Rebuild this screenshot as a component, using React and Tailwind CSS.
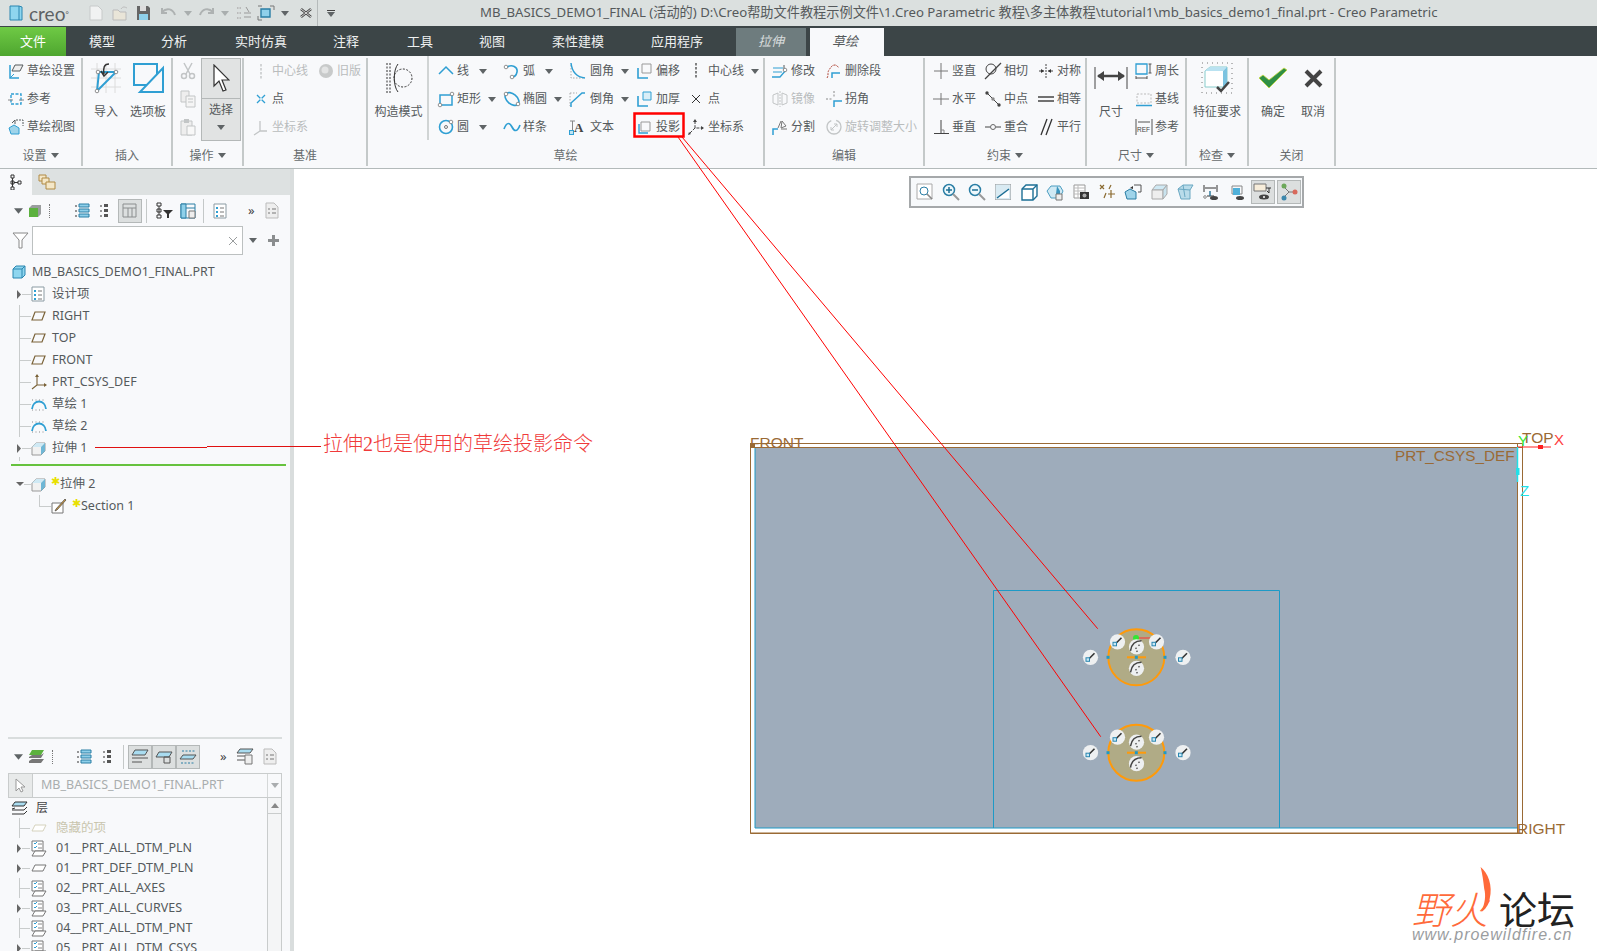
import React from "react";

const B = "#2f9fd3";
const D = "#555a5c";
const G = "#c2c5c6";
const T = "#7a6238";

const Svg = ({ w = 18, h = 18, vb, children }) => (
  <svg width={w} height={h} viewBox={vb || `0 0 ${w} ${h}`} fill="none" className="shrink-0">
    {children}
  </svg>
);

const Arrow = ({ className = "" }) => (
  <svg width="8" height="5" viewBox="0 0 8 5" className={`shrink-0 ${className}`}>
    <path d="M0 0h8L4 5z" fill="#5f6466" />
  </svg>
);

const Node = ({ x, y }) => <circle cx={x} cy={y} r="1.8" fill="#fff" stroke="#777" strokeWidth="0.8" />;

// ribbon icons
const icons = {
  setup: <Svg><path d="M5 9l3-6h8l-3 6z" fill="#eee" stroke={D} /><path d="M3 3v13h9" stroke={B} strokeWidth="1.5" /><path d="M3 16l4-4" stroke={B} /></Svg>,
  refs: <Svg><path d="M4 4h10v10H4z" stroke={B} strokeWidth="1.4" strokeDasharray="3 1.5" /><path d="M1 10h5M12 10h5" stroke="#888" /></Svg>,
  sview: <Svg><path d="M9 2h7v6" stroke={D} strokeDasharray="2 1" /><path d="M2 10l5-3 5 3v6H4z" fill="#9fd4ea" stroke={B} /><path d="M5 5l3-3v4" stroke={D} /></Svg>,
  cline: <Svg><path d="M9 2v15" stroke={G} strokeDasharray="2.5 1.5" strokeWidth="1.4" /></Svg>,
  oldv: <Svg><circle cx="9" cy="9" r="7" fill="#c8caca" /><circle cx="8" cy="8" r="3.5" fill="#e3e4e4" /></Svg>,
  pt: <Svg><path d="M5 5l8 8M13 5l-8 8" stroke={B} strokeWidth="1.3" /><circle cx="9" cy="9" r="1" fill="#fff" /></Svg>,
  csysg: <Svg><path d="M8 3v10l7 0M8 13l-6 4" stroke={G} strokeWidth="1.3" /></Svg>,
  line: <Svg><path d="M2 12l7-7 7 7" stroke={B} strokeWidth="1.5" /></Svg>,
  arc: <Svg><path d="M4 5c5-3 11 0 10 5s-4 5-5 5" stroke={B} strokeWidth="1.6" /><Node x={3} y={5} /><Node x={9} y={15} /></Svg>,
  rect: <Svg><path d="M3 5h12v10H3z" stroke={B} strokeWidth="1.5" /><Node x={15} y={4} /><Node x={3} y={15} /></Svg>,
  ell: <Svg><ellipse cx="9" cy="9" rx="8" ry="5" transform="rotate(40 9 9)" stroke={B} strokeWidth="1.6" /><Node x={3} y={4} /><Node x={15} y={14} /></Svg>,
  circ: <Svg><circle cx="9" cy="9" r="6.5" stroke={B} strokeWidth="1.6" /><circle cx="9" cy="9" r="1.5" stroke="#777" /><Node x={14} y={4} /></Svg>,
  spline: <Svg><path d="M1 11c3-8 6-6 8-2s5 6 8-2" stroke={B} strokeWidth="1.7" /></Svg>,
  fillet: <Svg><path d="M3 3v13h13" stroke="#aaa" strokeDasharray="1.5 1.5" /><path d="M3 1c1 9 5 14 14 15" stroke={B} strokeWidth="1.5" /></Svg>,
  chamfer: <Svg><path d="M2 3h7M2 3v13" stroke="#aaa" strokeDasharray="1.5 1.5" /><path d="M3 17v-4L14 3h3" stroke={B} strokeWidth="1.5" /></Svg>,
  text: <Svg><path d="M2 3h5M4.5 3v10" stroke="#888" /><rect x="1.5" y="12.5" width="4" height="4" stroke={B} fill="#bfe3f2" /><text x="6" y="14" fontSize="13" fontWeight="700" fill="#444" fontFamily="Liberation Serif">A</text></Svg>,
  offset: <Svg><path d="M7 2h9v9H7z" stroke="#999" /><path d="M3 6v10h10" stroke={B} strokeWidth="1.6" /></Svg>,
  thick: <Svg><path d="M8 2h8v8H8z" stroke={B} fill="#d9eef7" /><path d="M3 6v10h10" stroke={B} strokeWidth="1.6" /></Svg>,
  proj: <Svg><path d="M6 4h9v9H6z" stroke="#999" /><path d="M4 6v9h9" stroke={B} strokeWidth="1.4" /></Svg>,
  cl: <Svg><path d="M9 1v16" stroke="#333" strokeDasharray="2.5 1.5" strokeWidth="1.2" /></Svg>,
  ptd: <Svg><path d="M5 5l8 8M13 5l-8 8" stroke="#333" /></Svg>,
  csysd: <Svg><path d="M8 3v7h8M8 10l-6 6" stroke="#444" strokeDasharray="3 1.2" /><path d="M8 1l-2 3h4zM17 10l-3-2v4zM1 17l1-3 2 2z" fill="#444" /></Svg>,
  modify: <Svg><path d="M2 6h10M2 10h9" stroke={B} /><path d="M1 15h8l6-7" stroke={B} strokeWidth="1.3" /><path d="M13 3v5" stroke={D} /><Node x={14} y={8} /></Svg>,
  delseg: <Svg><path d="M2 16c2-3 0-5 2-8s3-5 6-5c3 0 2 3 4 2" stroke="#b34a3b" strokeDasharray="2 1" /><path d="M7 16v-5h8" stroke={B} strokeWidth="1.5" /></Svg>,
  mirror: <Svg><path d="M9 1v16" stroke={G} strokeDasharray="2 1" /><path d="M2 5l5-2v12l-5-2zM16 5l-5-2v12l5-2z" stroke={G} /></Svg>,
  corner: <Svg><path d="M1 9h7M9 1v7" stroke="#888" strokeDasharray="2 1.5" /><path d="M9 17v-6h8" stroke={B} strokeWidth="1.5" /></Svg>,
  divide: <Svg><path d="M2 17v-6h5" stroke={B} strokeWidth="1.5" /><path d="M10 11h6M10 3l-3 7M11 3l4 5-5 2z" stroke="#777" /></Svg>,
  rotres: <Svg><circle cx="9" cy="9" r="7" stroke={G} strokeWidth="1.3" strokeDasharray="30 5" /><path d="M6 12l6-6M6 12h3M6 12V9M12 6H9M12 6v3" stroke={G} /></Svg>,
  vert: <Svg><path d="M9 1v16M2 9h14" stroke="#777" /></Svg>,
  tang: <Svg><circle cx="7" cy="7" r="5" stroke="#444" /><path d="M1 17L17 1" stroke="#444" strokeWidth="1.2" /></Svg>,
  sym: <Svg><path d="M9 2v14" stroke="#444" strokeDasharray="2 1" /><path d="M2 9h5M11 9h5" stroke="#444" /><path d="M7 9L4 7v4zM11 9l3-2v4z" fill="#333" /></Svg>,
  horiz: <Svg><path d="M1 9h16M9 3v12" stroke="#777" /></Svg>,
  mid: <Svg><path d="M2 2l14 14" stroke="#444" /><circle cx="3" cy="3" r="1.7" fill="#444" /><circle cx="9" cy="9" r="1.7" fill="#888" /><circle cx="15" cy="15" r="1.7" fill="#444" /></Svg>,
  eq: <Svg><path d="M1 7h16M1 11h16" stroke="#444" strokeWidth="1.3" /></Svg>,
  perp: <Svg><path d="M9 2v13M2 15.5h15" stroke="#444" /><path d="M9 12h3v3" stroke="#888" /></Svg>,
  coin: <Svg><path d="M1 9h5M12 9h5" stroke="#444" /><circle cx="9" cy="9" r="2.5" stroke="#666" /></Svg>,
  par: <Svg><path d="M4 17L10 1M9 17l6-16" stroke="#333" strokeWidth="1.3" /></Svg>,
  perim: <Svg><path d="M1 2h11v10H1z" stroke={B} strokeWidth="1.3" /><path d="M15 2v9M13.5 2h3M13.5 11h3M1 16h11M1 14v3M12 14v3" stroke="#555" /></Svg>,
  base: <Svg><path d="M2 4h14v9H2z" stroke="#bbb" strokeDasharray="2 1.5" /><path d="M1 15.5h16" stroke={B} strokeWidth="1.5" /></Svg>,
  ref: <Svg><path d="M1 1v16M17 1v16M3 4h12" stroke="#555" /><text x="2" y="14" fontSize="6.5" fill="#444" fontFamily="Liberation Sans">REF</text></Svg>,
  cut: <Svg><path d="M5 1l6 11M13 1L7 12" stroke={G} strokeWidth="1.5" /><circle cx="5" cy="14" r="2.5" stroke={G} strokeWidth="1.5" /><circle cx="13" cy="14" r="2.5" stroke={G} strokeWidth="1.5" /></Svg>,
  copy: <Svg><path d="M2 1h8v11H2z" stroke={G} fill="#eee" /><path d="M7 6h9v11H7z" stroke={G} fill="#f5f5f5" /><path d="M9 9h5M9 12h5" stroke={G} /></Svg>,
  paste: <Svg><path d="M2 3h11v14H2z" stroke={G} fill="#eee" /><path d="M5 1h5v4H5z" fill={G} /><path d="M8 8h8v9H8z" stroke={G} fill="#f8f8f8" /></Svg>,
};

const Item = ({ icon, label, dim, arrow, width = "w-[20px]" }) => (
  <div className="flex items-center h-[28px] whitespace-nowrap">
    <span className={`${width} flex items-center shrink-0`}>{icons[icon]}</span>
    <span className={dim ? "text-[#b9bcbd]" : "text-[#555a5c]"}>{label}</span>
    {arrow && <Arrow className={label.length === 1 ? "ml-[10px]" : "ml-[7px]"} />}
  </div>
);

const Col = ({ className = "", children }) => <div className={`flex flex-col shrink-0 pt-[1px] ${className}`}>{children}</div>;

const Large = ({ width, label, children }) => (
  <div className={`flex flex-col items-center shrink-0 ${width}`}>
    <div className="h-[44px] flex items-center justify-center">{children}</div>
    <div className="h-[24px] flex items-center text-[#555a5c] whitespace-nowrap">{label}</div>
  </div>
);

const Group = ({ width, label, arrow, children }) => (
  <>
    <div className={`flex flex-col shrink-0 ${width}`}>
      <div className="h-[87px] flex">{children}</div>
      <div className="h-[25px] flex items-center justify-center gap-[4px] text-[#666b6d]">
        {label}
        {arrow && <Arrow />}
      </div>
    </div>
    <div className="w-[2px] shrink-0 my-[2px] bg-[#c4c9c9]" />
  </>
);

const TitleBar = () => (
  <div className="h-[26px] bg-[#dbe0df] flex items-center">
    <div className="w-[480px] shrink-0 flex items-center">
      <svg width="14" height="16" viewBox="0 0 14 16" className="ml-[9px] shrink-0">
        <path d="M1 1h9l3 1v13l-3 0H1z" fill="#8fd6ef" stroke="#2a86b0" />
        <path d="M10 1v14" stroke="#2a86b0" />
      </svg>
      <span className="ml-[6px] w-[46px] text-[19px] leading-none text-[#5d6264] font-['Lato',sans-serif]">creo<sup className="text-[8px]">°</sup></span>
      <span className="ml-[14px]"><Svg w={14} h={16}><path d="M1 1h8l4 4v10H1z" fill="#f1f2f2" stroke="#c7caca" /></Svg></span>
      <span className="ml-[9px]"><Svg w={17} h={16}><path d="M1 5h5l2 2h6v8H1z" fill="#e9e5d8" stroke="#bbb" /><path d="M9 4c2-3 4-2 6-1" stroke="#bbb" /></Svg></span>
      <span className="ml-[7px]"><Svg w={15} h={16}><path d="M1 1h11l2 2v12H1z" fill="#666" /><path d="M4 1h6v5H4z" fill="#ddd" /><path d="M3 9h9v6H3z" fill="#8fd0ea" /></Svg></span>
      <span className="ml-[10px]"><Svg w={15} h={12}><path d="M1 5c5-5 11-3 13 3M1 1v5h5" stroke="#aeb2b2" strokeWidth="2" /></Svg></span>
      <Arrow className="ml-[8px] opacity-40" />
      <span className="ml-[7px]"><Svg w={15} h={12}><path d="M14 5C9 0 3 2 1 8M14 1v5H9" stroke="#aeb2b2" strokeWidth="2" /></Svg></span>
      <Arrow className="ml-[7px] opacity-40" />
      <span className="ml-[7px]"><Svg w={15} h={16}><path d="M1 3h5M1 8h5M1 13h5" stroke="#bbb" strokeDasharray="1.5 1" strokeWidth="2" /><path d="M8 12h7M8 8h7M10 2l3 5" stroke="#999" /></Svg></span>
      <span className="ml-[6px]"><Svg w={18} h={16}><path d="M1 1h4M13 1h4v4M1 11v4h4" stroke="#777" /><path d="M4 4h9v8H4z" fill="#8fd0ea" stroke="#2a7ea5" strokeWidth="1.4" /></Svg></span>
      <Arrow className="ml-[6px]" />
      <span className="ml-[11px]"><Svg w={12} h={12}><path d="M1 2l10 8M11 2L1 10" stroke="#444" strokeWidth="2.5" /><path d="M1 2l10 8M11 2L1 10" stroke="#fff" strokeWidth="0.8" /></Svg></span>
      <span className="ml-[5px] w-[1px] h-[26px] bg-[#b5baba]" />
      <span className="ml-[9px] flex flex-col gap-[1px]"><span className="w-[8px] h-[1px] bg-[#444]" /><Arrow /></span>
    </div>
    <span className="text-[13.2px] text-[#55595b] whitespace-nowrap">MB_BASICS_DEMO1_FINAL (活动的) D:\Creo帮助文件教程示例文件\1.Creo Parametric 教程\多主体教程\tutorial1\mb_basics_demo1_final.prt - Creo Parametric</span>
  </div>
);

const tabs = [
  ["模型", "w-[72px]"],
  ["分析", "w-[72px]"],
  ["实时仿真", "w-[102px]"],
  ["注释", "w-[68px]"],
  ["工具", "w-[80px]"],
  ["视图", "w-[64px]"],
  ["柔性建模", "w-[108px]"],
  ["应用程序", "w-[90px]"],
];

const TabBar = () => (
  <div className="h-[30px] bg-[#3c4547] flex text-[13px]">
    <div className="w-[66px] mt-[1px] pt-[1px] flex items-center justify-center text-white bg-gradient-to-b from-[#6fca45] to-[#4ea62f]">文件</div>
    {tabs.map(([t, w]) => (
      <div key={t} className={`${w} pt-[2px] flex items-center justify-center text-[#eef0f0]`}>{t}</div>
    ))}
    <div className="w-[70px] ml-[14px] mt-[2px] mr-[2px] flex items-center justify-center italic text-[#d9dddd] bg-[#6e7c7e]">拉伸</div>
    <div className="w-[74px] ml-[2px] mt-[2px] pr-[4px] flex items-center justify-center italic text-[#555a5c] bg-[#f8f9fb]">草绘</div>
  </div>
);

const Ribbon = () => (
  <div className="h-[113px] bg-[#f8f9fb] border-b border-[#b3baba] flex text-[12px]">
    <Group width="w-[81px]" label="设置" arrow>
      <Col className="pl-[7px]">
        <Item icon="setup" label="草绘设置" />
        <Item icon="refs" label="参考" />
        <Item icon="sview" label="草绘视图" />
      </Col>
    </Group>
    <Group width="w-[88px]" label="插入">
      <Large width="w-[42px] ml-[2px]" label="导入">
        <Svg w={34} h={34}>
          <path d="M2 8h30M2 17h30M2 26h30M8 2v30M17 2v30M26 2v30" stroke="#dcdcdc" />
          <path d="M8 30L10 11h17L8 30" stroke={B} strokeWidth="2" />
          <path d="M20 3c-5 0-6 4-5 10M12 10l3 5 4-4" stroke="#333" strokeWidth="1.5" />
          <Node x={8} y={30} /><Node x={9} y={11} /><Node x={27} y={11} />
        </Svg>
      </Large>
      <Large width="w-[42px]" label="选项板">
        <Svg w={34} h={34}>
          <path d="M3 3h23v21H3z" stroke={B} strokeWidth="2" />
          <path d="M32 7v24H9z" stroke={B} strokeWidth="2" fill="#f8f9fb" />
        </Svg>
      </Large>
    </Group>
    <Group width="w-[69px]" label="操作" arrow>
      <Col className="pl-[6px] w-[28px]">
        <div className="h-[28px] flex items-center">{icons.cut}</div>
        <div className="h-[28px] flex items-center">{icons.copy}</div>
        <div className="h-[28px] flex items-center">{icons.paste}</div>
      </Col>
      <div className="w-[40px] mt-[2px] h-[83px] flex flex-col border border-[#b4b8b8] bg-[#e1e3e3]">
        <div className="h-[40px] flex items-center justify-center border-b border-[#b4b8b8]">
          <svg width="18" height="30" viewBox="0 0 18 30"><path d="M2 1v21l5-5 4 10 3-1-4-10h7z" fill="#fff" stroke="#333" strokeWidth="1.2" /></svg>
        </div>
        <div className="flex-1 flex flex-col items-center pt-[2px] gap-[6px] text-[#555a5c]">选择<Arrow /></div>
      </div>
    </Group>
    <Group width="w-[122px]" label="基准">
      <Col className="pl-[8px]">
        <div className="flex">
          <Item icon="cline" label="中心线" dim />
          <div className="ml-[9px]"><Item icon="oldv" label="旧版" dim /></div>
        </div>
        <Item icon="pt" label="点" />
        <Item icon="csysg" label="坐标系" dim />
      </Col>
    </Group>
    <Group width="w-[395px]" label="草绘">
      <div className="w-[61px] h-[84px] shrink-0 border-r-2 border-[#d0d4d4] flex flex-col items-center pl-[2px]">
        <div className="h-[44px] flex items-center justify-center">
          <Svg w={28} h={32}>
            <path d="M2 1v30M5 1v30" stroke="#333" strokeDasharray="2 1.5" />
            <path d="M13 2C8 8 8 24 13 30" stroke="#333" />
            <circle cx="18" cy="16" r="9" stroke="#333" strokeDasharray="2 1.5" />
          </Svg>
        </div>
        <div className="h-[24px] flex items-center text-[#555a5c] whitespace-nowrap">构造模式</div>
      </div>
      <Col className="w-[66px] ml-[8px]">
        <Item icon="line" label="线" arrow />
        <Item icon="rect" label="矩形" arrow />
        <Item icon="circ" label="圆" arrow />
      </Col>
      <Col className="w-[65px]">
        <Item icon="arc" label="弧" arrow />
        <Item icon="ell" label="椭圆" arrow />
        <Item icon="spline" label="样条" />
      </Col>
      <Col className="w-[67px]">
        <Item icon="fillet" label="圆角" arrow width="w-[22px]" />
        <Item icon="chamfer" label="倒角" arrow width="w-[22px]" />
        <Item icon="text" label="文本" width="w-[22px]" />
      </Col>
      <Col className="w-[52px]">
        <Item icon="offset" label="偏移" width="w-[21px]" />
        <Item icon="thick" label="加厚" width="w-[21px]" />
        <Item icon="proj" label="投影" width="w-[21px]" />
      </Col>
      <Col>
        <Item icon="cl" label="中心线" arrow width="w-[21px]" />
        <Item icon="ptd" label="点" width="w-[21px]" />
        <Item icon="csysd" label="坐标系" width="w-[21px]" />
      </Col>
    </Group>
    <Group width="w-[158px]" label="编辑">
      <Col className="w-[54px] ml-[6px]">
        <Item icon="modify" label="修改" />
        <Item icon="mirror" label="镜像" dim />
        <Item icon="divide" label="分割" />
      </Col>
      <Col>
        <Item icon="delseg" label="删除段" />
        <Item icon="corner" label="拐角" />
        <Item icon="rotres" label="旋转调整大小" dim />
      </Col>
    </Group>
    <Group width="w-[160px]" label="约束" arrow>
      <Col className="w-[52px] ml-[7px]">
        <Item icon="vert" label="竖直" />
        <Item icon="horiz" label="水平" />
        <Item icon="perp" label="垂直" />
      </Col>
      <Col className="w-[53px]">
        <Item icon="tang" label="相切" />
        <Item icon="mid" label="中点" />
        <Item icon="coin" label="重合" />
      </Col>
      <Col>
        <Item icon="sym" label="对称" />
        <Item icon="eq" label="相等" />
        <Item icon="par" label="平行" />
      </Col>
    </Group>
    <Group width="w-[98px]" label="尺寸" arrow>
      <Large width="w-[48px]" label="尺寸">
        <Svg w={34} h={24}>
          <path d="M1 1v22M33 1v22" stroke="#444" />
          <path d="M4 10h26" stroke="#444" strokeWidth="2.5" />
          <path d="M3 10l7-5v10zM31 10l-7-5v10z" fill="#444" />
        </Svg>
      </Large>
      <Col>
        <Item icon="perim" label="周长" />
        <Item icon="base" label="基线" />
        <Item icon="ref" label="参考" />
      </Col>
    </Group>
    <Group width="w-[60px]" label="检查" arrow>
      <Large width="w-[60px]" label="特征要求">
        <Svg w={32} h={32}>
          <path d="M1 1h30v30H1z" stroke="#777" strokeDasharray="1 4" />
          <path d="M4 9l5-4h17v16l-4 4H4z" fill="#fff" stroke="#8cc" />
          <path d="M4 9l5-4h17l-4 4z" fill="#b9e2f1" />
          <path d="M22 9l4-4v16l-4 4z" fill="#7cc3e0" />
          <path d="M16 25l4 4 8-9" stroke="#444" strokeWidth="2.5" />
        </Svg>
      </Large>
    </Group>
    <Group width="w-[85px]" label="关闭">
      <Large width="w-[40px] ml-[4px]" label="确定">
        <Svg w={30} h={22}><path d="M1 11l4-3 6 5L26 1l3 2-18 18z" fill="#2f8f45" stroke="#c4d83a" strokeWidth="0.8" /></Svg>
      </Large>
      <Large width="w-[40px]" label="取消">
        <Svg w={19} h={19}><path d="M2 2l15 15M17 2L2 17" stroke="#444" strokeWidth="4" /></Svg>
      </Large>
    </Group>
  </div>
);

const TreeCube = ({ size = 15 }) => (
  <Svg w={size} h={size} vb="0 0 15 15">
    <path d="M1 6l4-4h9v8l-4 4H1z" fill="#f1f1f1" stroke="#999" />
    <path d="M5 2h9l-4 4H1z" fill="#cfe9f4" />
    <path d="M10 6l4-4v8l-4 4z" fill="#6fb7d6" />
  </Svg>
);
const Plane = () => <Svg w={15} h={12}><path d="M4 2h10l-3 8H1z" stroke={T} strokeWidth="1.2" /></Svg>;
const Csys = () => <Svg w={16} h={16}><path d="M6 1v10h9M6 11l-5 4" stroke={T} strokeWidth="1.1" /><path d="M6 0l-2 3h4zM16 11l-3-2v4z" fill={T} /></Svg>;
const Sk = () => <Svg w={16} h={14}><path d="M1 12c1-10 13-10 14 0" stroke={B} strokeWidth="1.8" /><path d="M1 3h14M1 13h14" stroke="#888" strokeDasharray="1 2.5" /></Svg>;
const Items = () => <Svg w={14} h={16}><path d="M1 1h12v14H1z" stroke="#8b9ba3" fill="#fff" /><path d="M3 4h2v2H3zM3 8h2v2H3zM3 12h2v2H3z" fill={B} /><path d="M7 5h4M7 9h4M7 13h4" stroke="#777" /></Svg>;

const Expand = ({ open }) =>
  open ? (
    <svg width="8" height="6" viewBox="0 0 8 6"><path d="M0 1h8L4 5z" fill="#666" /></svg>
  ) : (
    <svg width="6" height="9" viewBox="0 0 6 9"><path d="M1 0l4 4.5L1 9z" fill="#666" /></svg>
  );

const Row = ({ icon, label, expand, open, line = true, star }) => (
  <div className="relative h-[22px] flex items-center whitespace-nowrap">
    {line && <span className="absolute left-[19px] top-0 w-[1px] bg-[#c9cccc] h-full" />}
    {line && <span className="absolute left-[19px] top-[11px] w-[12px] h-[1px] bg-[#c9cccc]" />}
    {expand && <span className="absolute left-[16px] top-0 h-full flex items-center bg-[#f8f9fb]"><Expand open={open} /></span>}
    <span className="ml-[31px] w-[21px] flex items-center shrink-0 relative">{icon}</span>
    {star && <span className="text-[#e8e000] text-[11px] leading-none -ml-[1px] self-start mt-[2px]">✱</span>}
    <span>{label}</span>
  </div>
);

const LayerIcon = () => (
  <Svg w={16} h={17}>
    <path d="M1 1h11v10H1z" fill="#fff" stroke="#777" />
    <path d="M3 3l1 1 2-2M3 7l1 1 2-2" stroke={B} />
    <path d="M7 4h4M7 8h4" stroke="#888" />
    <path d="M4 11h11l-3 5H1z" fill="#fff" stroke="#777" />
  </Svg>
);

const Pressed = ({ children, className = "" }) => (
  <span className={`flex items-center justify-center bg-[#dcdfdf] border border-[#b4b8b8] ${className}`}>{children}</span>
);

const TreeListIcon = () => (
  <Svg w={16} h={16}><path d="M1 3h2M1 8h2M1 13h2" stroke="#333" /><path d="M5 1h10v3H5zM5 6h10v3H5zM5 11h10v3H5z" fill="#8fd0ea" stroke="#2a7ea5" /></Svg>
);
const TreeColIcon = () => (
  <Svg w={11} h={16}><path d="M1 3l2 0M1 8h2M1 13h2" stroke="#333" /><path d="M5 1h4v3H5zM5 6h4v3H5zM5 11h4v3H5z" fill="#555" /></Svg>
);
const DocIcon = () => (
  <Svg w={14} h={17}><path d="M1 1h8l4 4v11H1z" fill="#eee" stroke="#bbb" /><path d="M3 7h2M7 7h4M3 11h2M7 11h4" stroke="#777" /></Svg>
);

const ModelTree = () => (
  <div className="h-[568px] shrink-0 flex flex-col">
    <div className="h-[26px] flex bg-[#dde1e1]">
      <div className="w-[32px] bg-[#f8f9fb] flex items-center justify-center">
        <Svg w={12} h={16}><path d="M1 1h3v3H1zM1 7h3v3H1zM1 13h3v3H1zM8 7h3v3H8z" stroke="#333" /><path d="M2.5 4v9M4 8.5h4" stroke="#333" /></Svg>
      </div>
      <div className="ml-[6px] flex items-center">
        <Svg w={18} h={18}><path d="M1 2h7v6H1z" fill="#f4e7c8" stroke="#b08a44" /><path d="M4 5h7v6H4z" fill="#f4e7c8" stroke="#b08a44" /><path d="M8 9h9v7H8z" fill="#f4e7c8" stroke="#b08a44" /></Svg>
      </div>
    </div>
    <div className="h-[31px] flex items-center">
      <Arrow className="ml-[14px] w-[9px] h-[6px]" />
      <span className="ml-[5px]"><Svg w={14} h={14}><path d="M1 4h9v9H1z" fill="#5cb13e" /><path d="M1 4l3-3h9l-3 3zM10 4l3-3v9l-3 3z" fill="#9a9d9e" /></Svg></span>
      <span className="ml-[7px] h-[14px] w-[1px] border-l border-dotted border-[#777]" />
      <span className="ml-[24px]"><TreeListIcon /></span>
      <span className="ml-[9px]"><TreeColIcon /></span>
      <Pressed className="ml-[8px] w-[24px] h-[24px]">
        <Svg w={16} h={16}><path d="M1 1h13v13H1zM1 5h13M6 5v9M10 5v9" stroke="#8b8e8f" /></Svg>
      </Pressed>
      <span className="ml-[4px] w-[1px] h-[24px] bg-[#c4c8c8]" />
      <span className="ml-[9px]"><Svg w={17} h={17}><path d="M1 1h4v3H1zM1 7h4v3H1zM1 13h4v3H1zM3 4v9" stroke="#333" /><path d="M7 8h10l-4 4v4h-2v-4z" fill="#333" /></Svg></span>
      <span className="ml-[7px]"><Svg w={16} h={16}><path d="M1 1h14v14H1z" stroke="#2a7ea5" /><path d="M1 1h5v14H1z" fill="#8fd0ea" stroke="#2a7ea5" /><path d="M6 5h9" stroke="#2a7ea5" /><path d="M9 8h6v7H9z" fill="#eee" stroke="#777" /></Svg></span>
      <span className="ml-[7px] w-[1px] h-[24px] bg-[#c4c8c8]" />
      <span className="ml-[9px]"><Items /></span>
      <span className="ml-[21px] text-[#444] text-[13px] leading-none w-[14px]">»</span>
      <span className="ml-[3px]"><DocIcon /></span>
    </div>
    <div className="h-[29px] flex items-center">
      <span className="ml-[12px] w-[20px]"><Svg w={17} h={17}><path d="M1 1h15l-6 7v8H7V8z" fill="#fff" stroke="#888" /></Svg></span>
      <div className="w-[211px] h-[29px] border border-[#bcc0c0] bg-white flex items-center justify-end pr-[4px]">
        <Svg w={10} h={10}><path d="M1 1l8 8M9 1L1 9" stroke="#9a9d9e" /></Svg>
      </div>
      <Arrow className="ml-[6px]" />
      <span className="ml-[11px] relative w-[11px] h-[11px]">
        <span className="absolute left-0 top-[4px] w-[11px] h-[3px] bg-[#8b8e8f]" />
        <span className="absolute left-[4px] top-0 w-[3px] h-[11px] bg-[#8b8e8f]" />
      </span>
    </div>
    <div className="h-[22px] mt-[6px] flex items-center">
      <span className="ml-[12px] w-[20px]"><Svg w={14} h={14}><path d="M1 4l3-3h9v9l-3 3H1z" fill="#8fd6ef" stroke="#2a86b0" /><path d="M1 4h9v9M10 4l3-3" stroke="#2a86b0" /></Svg></span>
      MB_BASICS_DEMO1_FINAL.PRT
    </div>
    <Row icon={<Items />} label="设计项" expand />
    <Row icon={<Plane />} label="RIGHT" />
    <Row icon={<Plane />} label="TOP" />
    <Row icon={<Plane />} label="FRONT" />
    <Row icon={<Csys />} label="PRT_CSYS_DEF" />
    <Row icon={<Sk />} label="草绘 1" />
    <Row icon={<Sk />} label="草绘 2" />
    <Row icon={<TreeCube />} label="拉伸 1" expand />
    <div className="relative h-[16px] mt-[-2px] flex items-center">
      <span className="absolute left-[19px] top-0 h-[4px] w-[1px] bg-[#c9cccc]" />
      <div className="ml-[11px] w-[275px] h-[2px] bg-[#66c23e]" />
    </div>
    <Row icon={<TreeCube />} label="拉伸 2" expand open star />
    <div className="relative h-[22px] flex items-center whitespace-nowrap">
      <span className="absolute left-[39px] top-0 w-[1px] h-[11px] bg-[#c9cccc]" />
      <span className="absolute left-[39px] top-[11px] w-[12px] h-[1px] bg-[#c9cccc]" />
      <span className="ml-[51px] w-[21px]"><Svg w={16} h={16}><path d="M1 5h11v10H1z" fill="#fff" stroke="#777" /><path d="M5 11l9-10 1 1-9 10-2 1z" fill="#c94" stroke="#444" strokeWidth="0.7" /></Svg></span>
      <span className="text-[#e8e000] text-[11px] leading-none self-start mt-[2px]">✱</span>
      Section 1
    </div>
  </div>
);

const LayerRow = ({ icon, label, expand, muted }) => (
  <div className={`relative h-[20px] flex items-center whitespace-nowrap ${muted ? "text-[#c9c5ae]" : ""}`}>
    <span className="absolute left-[19px] top-0 w-[1px] h-full bg-[#c9cccc]" />
    <span className="absolute left-[19px] top-[10px] w-[11px] h-[1px] bg-[#c9cccc]" />
    {expand && <span className="absolute left-[16px] top-0 h-full flex items-center bg-[#f8f9fb]"><Expand /></span>}
    <span className="ml-[31px] w-[25px] flex items-center shrink-0 relative">{icon}</span>
    {label}
  </div>
);

const FlatPlane = ({ muted }) => (
  <Svg w={16} h={8}><path d="M4 1h11l-3 6H1z" fill="#fff" stroke={muted ? "#d5d2bd" : "#777"} /></Svg>
);

const LayerTree = () => (
  <div className="flex-1 flex flex-col overflow-hidden">
    <div className="h-[3px] shrink-0 mx-[8px] mt-[-1px] bg-[#d9dddd]" />
    <div className="h-[33px] shrink-0 mt-[1px] flex items-center">
      <Arrow className="ml-[14px] w-[9px] h-[6px]" />
      <span className="ml-[5px]"><Svg w={17} h={15}><path d="M4 1h12l-3 5H1z" fill="#5cb13e" /><path d="M1 8l3-2h9l3-2-3 5H1zM1 12l3-2h12l-3 4H1z" fill="#777" /></Svg></span>
      <span className="ml-[7px] h-[14px] w-[1px] border-l border-dotted border-[#777]" />
      <span className="ml-[23px]"><TreeListIcon /></span>
      <span className="ml-[10px]"><TreeColIcon /></span>
      <span className="ml-[10px] w-[1px] h-[24px] bg-[#c4c8c8]" />
      <Pressed className="ml-[4px] w-[24px] h-[24px]"><Svg w={18} h={16}><path d="M4 1h13l-3 5H1z" fill="#a9dcf0" stroke="#555" /><path d="M1 9h16M1 13h10" stroke="#555" /></Svg></Pressed>
      <Pressed className="w-[24px] h-[24px]"><Svg w={18} h={16}><path d="M4 3h13l-3 5H1z" fill="#a9dcf0" stroke="#555" /><path d="M9 8h6v6H9z" stroke="#555" /></Svg></Pressed>
      <Pressed className="w-[24px] h-[24px]"><Svg w={18} h={16}><path d="M3 2h13M2 14h13" stroke="#2a7ea5" strokeDasharray="2 1.5" /><path d="M4 6h13l-3 4H1z" fill="#a9dcf0" stroke="#555" /></Svg></Pressed>
      <span className="ml-[20px] text-[#444] text-[13px] leading-none w-[14px]">»</span>
      <span className="ml-[2px]"><Svg w={18} h={17}><path d="M4 1h13l-3 4H1z" fill="#a9dcf0" stroke="#555" /><path d="M1 8h8M1 12h8" stroke="#555" /><path d="M9 7h7v9H9z" fill="#eee" stroke="#777" /></Svg></span>
      <span className="ml-[9px]"><DocIcon /></span>
    </div>
    <div className="h-[25px] shrink-0 mx-[8px] flex border border-[#c9cccc] text-[#a9adae]">
      <div className="w-[24px] bg-[#e8eaea] border-r border-[#c9cccc] flex items-center justify-center">
        <Svg w={11} h={15}><path d="M1 1v12l3-3 2 4 2-1-2-4h4z" stroke="#999" fill="#fff" /></Svg>
      </div>
      <div className="flex-1 flex items-center pl-[8px]">MB_BASICS_DEMO1_FINAL.PRT</div>
      <div className="w-[14px] border-l border-[#d5d8d8] flex items-center justify-center"><Arrow className="opacity-50" /></div>
    </div>
    <div className="relative flex-1">
      <div className="absolute right-[8px] top-0 bottom-0 w-[15px] border-x border-[#c9cccc] bg-[#f4f5f6]">
        <div className="h-[16px] border-b border-[#c9cccc] flex items-center justify-center">
          <svg width="8" height="5" viewBox="0 0 8 5"><path d="M0 5h8L4 0z" fill="#888" /></svg>
        </div>
      </div>
      <div className="h-[20px] flex items-center">
        <span className="ml-[11px] w-[25px]"><Svg w={17} h={15}><path d="M4 1h12l-3 4H1z" fill="#a9dcf0" stroke="#333" /><path d="M1 8l3-1M1 9h12l3-3M1 13h12l3-3" stroke="#333" /></Svg></span>
        <span className="text-[#444] text-[12px]">层</span>
      </div>
      <LayerRow icon={<FlatPlane muted />} label="隐藏的项" muted />
      <LayerRow icon={<LayerIcon />} label="01__PRT_ALL_DTM_PLN" expand />
      <LayerRow icon={<FlatPlane />} label="01__PRT_DEF_DTM_PLN" expand />
      <LayerRow icon={<LayerIcon />} label="02__PRT_ALL_AXES" />
      <LayerRow icon={<LayerIcon />} label="03__PRT_ALL_CURVES" expand />
      <LayerRow icon={<LayerIcon />} label="04__PRT_ALL_DTM_PNT" />
      <LayerRow icon={<LayerIcon />} label="05__PRT_ALL_DTM_CSYS" expand />
    </div>
  </div>
);

const ViewBtn = ({ children, pressed }) => (
  <span className={`w-[24px] h-[24px] flex items-center justify-center shrink-0 ${pressed ? "bg-[#dcdfdf] border border-[#b4b8b8]" : ""}`}>{children}</span>
);

const Mag = ({ sign }) => (
  <Svg w={18} h={18}>
    <circle cx="7" cy="7" r="5.5" fill="#eef8fc" stroke="#2a7ea5" strokeWidth="1.5" />
    <path d="M11 11l6 6" stroke="#999" strokeWidth="2" />
    {sign && <path d="M4 7h6" stroke="#1d6f95" strokeWidth="1.5" />}
    {sign === "+" && <path d="M7 4v6" stroke="#1d6f95" strokeWidth="1.5" />}
  </Svg>
);

const ViewToolbar = () => (
  <div className="absolute left-[615px] top-[7px] w-[395px] h-[32px] border-2 border-[#a5a8aa] bg-[#f7f9fb] flex items-center pl-[2px] gap-[2px]">
    <ViewBtn><Svg w={18} h={18}><path d="M1 1h15v15H1z" stroke="#aaa" fill="#fff" /><circle cx="8" cy="8" r="4" stroke="#2a7ea5" /><path d="M11 11l5 5" stroke="#888" strokeWidth="1.6" /></Svg></ViewBtn>
    <ViewBtn><Mag sign="+" /></ViewBtn>
    <ViewBtn><Mag sign="-" /></ViewBtn>
    <ViewBtn><Svg w={16} h={16}><path d="M0 0h16v16H0z" fill="#d9eaf2" stroke="#999" /><path d="M2 14L14 5v9z" fill="#fff" /><path d="M2 14L14 5" stroke="#1d6f95" strokeWidth="1.5" /></Svg></ViewBtn>
    <ViewBtn><Svg w={17} h={17}><path d="M1 5l4-4h11v11l-4 4H1z" fill="#fff" stroke="#1d6f95" strokeWidth="1.4" /><path d="M1 5h11v11M12 5l4-4" stroke="#1d6f95" strokeWidth="1.4" /></Svg></ViewBtn>
    <ViewBtn><Svg w={18} h={17}><path d="M1 7l4-5h9l3 5-3 7H5z" fill="#cfe9f4" stroke="#4c9dc0" /><path d="M11 2l3 5v3h-4z" fill="#3a94bd" /><path d="M10 10h6v6h-6z" fill="#eee" stroke="#777" /></Svg></ViewBtn>
    <ViewBtn><Svg w={17} h={16}><path d="M1 1h11v13H1z" fill="#fff" stroke="#999" /><path d="M1 4h11M1 7h11M1 10h11M5 1v13" stroke="#bbb" /><path d="M7 8h9v7H7z" fill="#333" /><circle cx="11.5" cy="11.5" r="2" fill="#aaa" /></Svg></ViewBtn>
    <ViewBtn><Svg w={18} h={18}><path d="M2 2l4 4M6 2L2 6M11 6l2-4M6 15l2-5M10 11h7M13 7v8" stroke="#8a6a2f" strokeWidth="1.2" /></Svg></ViewBtn>
    <ViewBtn><Svg w={18} h={16}><path d="M10 1h7v7h-3" stroke="#555" /><path d="M1 8l5-3 6 3v7H3z" fill="#9fd4ea" stroke="#2a7ea5" /><path d="M6 4l3-2v3z" fill="#333" /></Svg></ViewBtn>
    <ViewBtn><Svg w={17} h={16}><path d="M1 6l4-5h11l-4 5z" fill="#cfe9f4" stroke="#aaa" /><path d="M1 6h11v9H1z" fill="#eee" stroke="#aaa" /><path d="M12 6l4-5v9l-4 5z" fill="#c9e3ee" stroke="#aaa" /></Svg></ViewBtn>
    <ViewBtn><Svg w={17} h={16}><path d="M1 5l5-4h10l-3 5v9H4z" fill="#b9dcea" stroke="#6aa8c2" /><path d="M1 5l12 1M6 1l2 12" stroke="#6aa8c2" /></Svg></ViewBtn>
    <ViewBtn><Svg w={17} h={17}><path d="M1 1v7M14 1v7M2 4h11M7 7v5M4 12h7" stroke="#333" /><path d="M7 7v5" stroke={B} /><circle cx="2" cy="13" r="1.3" stroke="#888" /><ellipse cx="11" cy="14" rx="4" ry="2" fill="#444" /></Svg></ViewBtn>
    <ViewBtn><Svg w={17} h={17}><path d="M3 2h10v8H3z" stroke="#888" /><path d="M4 4h7v7H4z" fill="#4fb0d9" /><ellipse cx="11" cy="14" rx="4" ry="2" fill="#444" /></Svg></ViewBtn>
    <ViewBtn pressed><Svg w={20} h={18}><path d="M1 1h12v7H1z" fill="#f7edda" stroke="#777" /><path d="M13 5h5M16 5v5l-2-2" stroke="#333" /><ellipse cx="11" cy="14" rx="5" ry="2.5" fill="#444" /><circle cx="11" cy="14" r="1" fill="#fff" /></Svg></ViewBtn>
    <ViewBtn pressed><Svg w={18} h={18}><path d="M4 4l5 5-5 5M9 9h6" stroke="#777" /><circle cx="4" cy="3" r="2.5" fill="#6ca85a" /><circle cx="15" cy="9" r="2.5" fill="#d8695c" /><circle cx="4" cy="15" r="2.5" fill="#3d88ad" /></Svg></ViewBtn>
  </div>
);

const Handle = ({ x, y }) => (
  <g transform={`translate(${x} ${y})`} fill="none">
    <circle r="7.6" fill="#eef0f1" />
    <path d="M-2 2L4-4" stroke="#333" strokeWidth="1.6" />
    <rect x="-4.5" y="0.5" width="3.5" height="3.5" fill="#c9e8f5" stroke="#2a86b0" />
  </g>
);

const DimHandle = ({ x, y }) => (
  <g transform={`translate(${x} ${y})`} fill="none">
    <circle r="7.6" fill="#eef0f1" />
    <path d="M-6 4C-5-3-1-6 5-6" stroke="#444" strokeWidth="1.5" />
    <path d="M-1 2l1-1M2-1l1-1M0 5l1-1" stroke="#444" strokeWidth="1.3" />
  </g>
);

const Circle = ({ y, first }) => (
  <g>
    <circle cx="1136.3" cy={y} r="28" fill="#b0ab86" stroke="#ff9a0a" strokeWidth="2" />
    {first && <path d="M1136 638h14" stroke="#ff3030" />}
    {first && <circle cx="1136" cy="638" r="3" fill="#33e633" />}
    <path d={`M1127 ${y}h19`} stroke="#ff9a0a" strokeWidth="2" />
    <rect x="1106.500" y={y - 1.5} width="3" height="3" fill="#1e9ac6" />
    <rect x="1134.800" y={y - 1.5} width="3" height="3" fill="#1e9ac6" />
    <rect x="1163.500" y={y - 1.5} width="3" height="3" fill="#1e9ac6" />
    <Handle x={1090.500} y={y} />
    <Handle x={1183} y={y} />
    <Handle x={1117.500} y={y - 15.500} />
    <Handle x={1156.500} y={y - 15.500} />
    <DimHandle x={1136.500} y={y - 10.500} />
    <DimHandle x={1136.500} y={y + 11} />
  </g>
);

const Model = () => (
  <svg width="1303" height="782" viewBox="294 169 1303 782" className="absolute left-0 top-0" fontFamily="Liberation Sans">
    <rect x="755" y="447" width="762" height="381" fill="#9eacbb" />
    <path d="M755 447v381h762" stroke="#1e9ac6" strokeWidth="1" fill="none" />
    <path d="M993.500 828V590.500h286V828" stroke="#1e9ac6" fill="none" />
    <path d="M750.500 443.500h772v390h-772z" stroke="#9a6a35" fill="none" />
    <path d="M750.500 447.500h772M1517.500 443v390M750 833h772" stroke="#9a6a35" fill="none" />
    <rect x="750" y="443" width="5" height="5" fill="#9a6a35" />
    <Circle y={657.300} first />
    <Circle y={752.700} />
    <text x="750" y="448" fontSize="15.500" fill="#9a6a35" fontWeight="300">FRONT</text>
    <text x="1395" y="461" fontSize="15.300" fill="#9a6a35">PRT_CSYS_DEF</text>
    <text x="1522" y="443" fontSize="15.500" fill="#9a6a35">TOP</text>
    <text x="1517" y="834" fontSize="15.500" fill="#9a6a35">RIGHT</text>
    <text x="1554" y="445" fontSize="15" fill="#ff4040">X</text>
    <text x="1518" y="446" fontSize="15" fill="#33e633">Y</text>
    <text x="1520" y="496" fontSize="15" fill="#22e0e8">Z</text>
    <path d="M1517 447h34" stroke="#ff2020" />
    <rect x="1538" y="445" width="5" height="4" fill="#ff2020" />
    <path d="M1517.500 447v35" stroke="#22e0e8" strokeWidth="1.500" />
    <rect x="1516" y="468" width="3.500" height="7" fill="#22e0e8" />
  </svg>
);

const Watermark = () => (
  <div className="absolute left-[1118px] top-[720px] w-[175px]">
    <div className="flex items-center h-[38px] text-[38px] leading-none font-['Noto_Sans_CJK_SC',sans-serif]">
      <span className="text-[#ff6a3a] italic font-light">野火</span>
      <span className="ml-[11px] text-[#222]">论坛</span>
    </div>
    <div className="text-[16px] leading-none italic tracking-[1px] text-[#9a9d9f] font-['Liberation_Sans',sans-serif]">www.proewildfire.cn</div>
    <svg width="18" height="46" viewBox="0 0 20 40" preserveAspectRatio="none" className="absolute left-[65px] -top-[22px]">
      <path d="M4 0c8 5 14 16 10 28-1 5-5 9-9 11 4-8 5-14 3-20C7 12 6 6 4 0z" fill="#ff6a3a" />
    </svg>
  </div>
);

const Overlay = () => (
  <svg width="1597" height="951" viewBox="0 0 1597 951" className="absolute left-0 top-0 pointer-events-none" fill="none">
    <rect x="634.500" y="113.500" width="49" height="23" stroke="#f00" strokeWidth="2.500" />
    <path d="M678 137L1100.700 736.700M682 137L1097.700 628.700" stroke="#f00" />
    <path d="M95 447.500H207M207 446.500H321" stroke="#e01010" />
  </svg>
);

export default function App() {
  return (
    <div className="relative w-[1597px] h-[951px] overflow-hidden bg-white text-[12.500px] text-[#555a5c] font-['Noto_Sans','Noto_Sans_CJK_SC',sans-serif]">
      <TitleBar />
      <TabBar />
      <Ribbon />
      <div className="flex h-[782px]">
        <div className="w-[294px] shrink-0 flex flex-col bg-[#f8f9fb] border-r-4 border-[#d9dddd]">
          <ModelTree />
          <LayerTree />
        </div>
        <div className="relative flex-1 bg-white">
          <Model />
          <ViewToolbar />
          <div className="absolute left-[29px] top-[263px] text-[20px] leading-[24px] text-[#f03a3a] whitespace-nowrap font-['Liberation_Serif','Noto_Sans_CJK_SC',serif] font-light">拉伸2也是使用的草绘投影命令</div>
          <Watermark />
        </div>
      </div>
      <Overlay />
    </div>
  );
}
